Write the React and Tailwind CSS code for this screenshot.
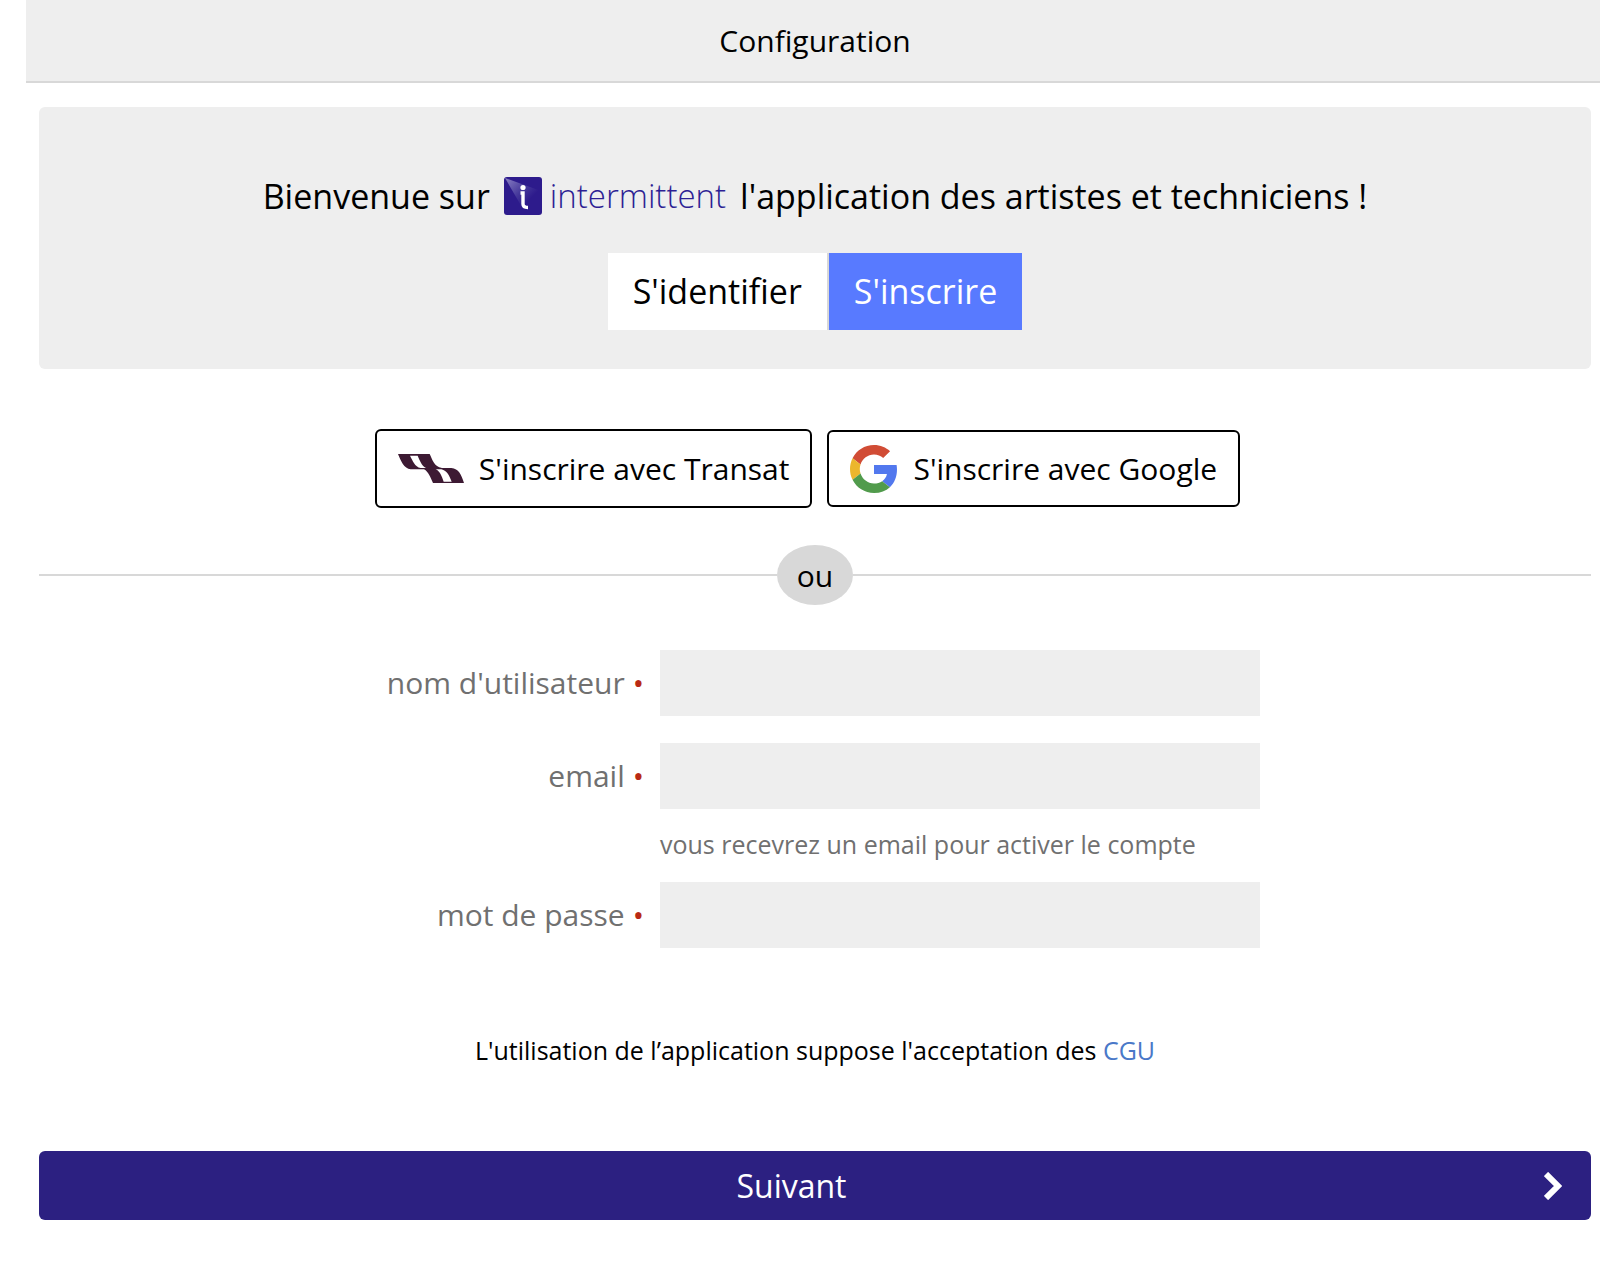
import { useState } from "react";

const fields = [
  { id: "username", label: "nom d'utilisateur", type: "text" },
  {
    id: "email",
    label: "email",
    type: "email",
    hint: "vous recevrez un email pour activer le compte",
  },
  { id: "password", label: "mot de passe", type: "password" },
];

function IntermittentLogo() {
  return (
    <span className="flex items-center gap-2 text-[#2d1f94]">
      <svg width="38" height="38" viewBox="0 0 38 38" aria-hidden="true">
        <defs>
          <linearGradient id="shine" x1="0" y1="0" x2="0.8" y2="0.8">
            <stop offset="0" stopColor="#8a80c4" />
            <stop offset="0.5" stopColor="#46399b" />
            <stop offset="0.8" stopColor="#2d1b8c" />
          </linearGradient>
        </defs>
        <rect width="38" height="38" rx="3" fill="#2d1b8c" />
        <path d="M1 1 L37 14 V37 H22 Z" fill="url(#shine)" />
        <circle cx="19" cy="10.500" r="2.600" fill="#fff" />
        <path d="M16.500 16H19V27Q19 30.500 24 30.500" fill="none" stroke="#fff" strokeWidth="3.400" />
      </svg>
      <span className="text-[33px] font-light">intermittent</span>
    </span>
  );
}

function TransatLogo() {
  return (
    <svg width="66" height="29" viewBox="0 0 198 87" aria-hidden="true">
      <path
        d="M0 0H95C103 16 108 38 132 42H160C182 44 190 62 198 87H105C97 70 92 54 78 46H38C18 44 8 20 0 0Z"
        fill="#3d1a33"
      />
      <path d="M36 5H59C65 18 70 34 84 42H68C50 38 44 20 36 5Z" fill="#fff" />
      <path d="M113 46H130C148 50 154 66 161 83H137C131 66 126 52 113 46Z" fill="#fff" />
    </svg>
  );
}

function GoogleLogo() {
  return (
    <svg width="48" height="48" viewBox="0 0 48 48" aria-hidden="true">
      <path fill="#d14c35" d="M24 9.500c3.540 0 6.710 1.220 9.210 3.600l6.850-6.850C35.900 2.380 30.470 0 24 0 14.620 0 6.510 5.380 2.560 13.220l7.980 6.190C12.430 13.720 17.740 9.500 24 9.500z" />
      <path fill="#5278ee" d="M46.980 24.550c0-1.570-.15-3.090-.38-4.550H24v9.020h12.940c-.58 2.960-2.260 5.480-4.780 7.180l7.730 6c4.510-4.180 7.090-10.360 7.090-17.650z" />
      <path fill="#ecb62c" d="M10.530 28.590c-.48-1.450-.76-2.990-.76-4.590s.27-3.140.76-4.590l-7.980-6.190C.92 16.460 0 20.120 0 24c0 3.880.92 7.540 2.560 10.780l7.970-6.190z" />
      <path fill="#519b4c" d="M24 48c6.480 0 11.930-2.130 15.890-5.810l-7.730-6c-2.150 1.450-4.920 2.300-8.160 2.300-6.260 0-11.570-4.220-13.470-9.910l-7.980 6.190C6.510 42.620 14.620 48 24 48z" />
    </svg>
  );
}

export default function App() {
  const [mode, setMode] = useState("signup");
  const [form, setForm] = useState({ username: "", email: "", password: "" });

  const handleChange = (e) => {
    setForm({ ...form, [e.target.name]: e.target.value });
  };

  return (
    <div className="min-h-screen bg-white pl-[26px] font-['Open_Sans',sans-serif] text-black">
      <header className="flex h-[83px] items-center justify-center border-b-2 border-[#d8d8d8] bg-[#eee] pl-1">
        <h1 className="text-[30px]">Configuration</h1>
      </header>

      <main className="pt-6 pr-[9px] pl-[13px]">
        <section className="flex flex-col items-center rounded-md bg-[#eee] pt-16 pb-[39px]">
          <p className="mb-8 flex h-[50px] items-center gap-[14px] text-[34px] whitespace-nowrap">
            <span>Bienvenue sur</span>
            <IntermittentLogo />
            <span>l'application des artistes et techniciens !</span>
          </p>
          <div className="flex h-[77px] text-[34px]">
            <button
              type="button"
              onClick={() => setMode("login")}
              aria-pressed={mode === "login"}
              className="border-r-2 border-[#d8d8d8] bg-white px-[25px]"
            >
              S'identifier
            </button>
            <button
              type="button"
              onClick={() => setMode("signup")}
              aria-pressed={mode === "signup"}
              className="bg-[#587aff] px-[25px] text-white"
            >
              S'inscrire
            </button>
          </div>
        </section>

        <div className="mt-[60px] flex items-center justify-center text-[30px]">
          <button
            type="button"
            className="mr-[15px] flex h-[79px] items-center gap-[15px] rounded-md border-2 border-black px-[21px]"
          >
            <TransatLogo />
            S'inscrire avec Transat
          </button>
          <button
            type="button"
            className="mr-[15px] flex h-[77px] items-center gap-[15px] rounded-md border-2 border-black px-[21px]"
          >
            <GoogleLogo />
            S'inscrire avec Google
          </button>
        </div>

        <div className="mt-[37px] flex items-center">
          <div className="h-[2px] flex-1 bg-[#d8d8d8]" />
          <span className="flex h-[60px] w-[76px] items-center justify-center rounded-[50%] bg-[#d8d8d8] text-[30px]">
            ou
          </span>
          <div className="h-[2px] flex-1 bg-[#d8d8d8]" />
        </div>

        <form id="signup" className="mx-auto mt-[45px] w-[890px] max-w-full" onSubmit={(e) => e.preventDefault()}>
          {fields.map((field) => (
            <div key={field.id} className="mb-[27px] flex last:mb-0">
              <label
                htmlFor={field.id}
                className="flex h-[66px] flex-1 items-center justify-end gap-2 pr-4 pb-[2px] text-[30px] text-[#707070]"
              >
                {field.label}
                <span className="text-[#b92a15]">•</span>
              </label>
              <div className="w-[600px]">
                <input
                  id={field.id}
                  name={field.id}
                  type={field.type}
                  value={form[field.id]}
                  onChange={handleChange}
                  className="block h-[66px] w-full bg-[#eee] px-4 text-[30px] outline-none"
                />
                {field.hint && (
                  <p className="mt-6 text-[25px] leading-[22px] text-[#707070]">{field.hint}</p>
                )}
              </div>
            </div>
          ))}
        </form>

        <p className="mt-[84px] text-center text-[25px] leading-[36px]">
          L'utilisation de l’application suppose l'acceptation des{" "}
          <a href="#cgu" className="text-[#4a78c8]">
            CGU
          </a>
        </p>

        <button
          type="submit"
          form="signup"
          className="mt-[83px] mb-[52px] flex h-[69px] w-full items-center rounded-md bg-[#2c2081] pr-[29px] text-[32px] text-white"
        >
          <span className="flex-1 text-center">Suivant</span>
          <svg width="18" height="28" viewBox="0 0 18 28" aria-hidden="true">
            <path d="M2 2 L14 14 L2 26" fill="none" stroke="#fff" strokeWidth="6" />
          </svg>
        </button>
      </main>
    </div>
  );
}
